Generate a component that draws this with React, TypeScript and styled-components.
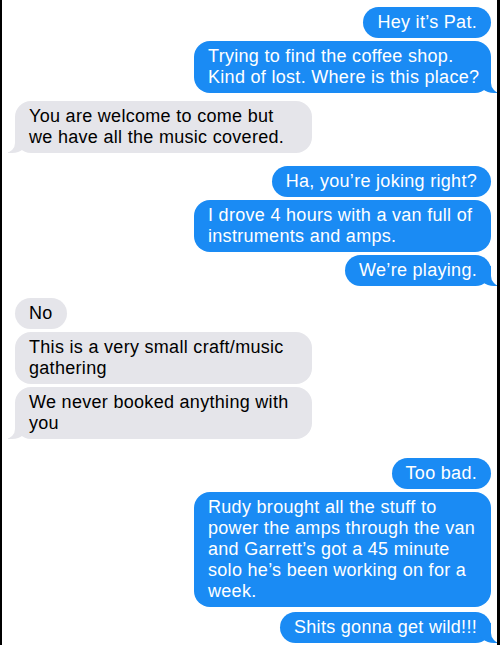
import React from "react";
import styled, { createGlobalStyle, css } from "styled-components";

const GlobalStyle = createGlobalStyle`
  html, body {
    margin: 0;
    padding: 0;
    background: #ffffff;
  }
  body {
    font-family: "Liberation Sans", Arial, Helvetica, sans-serif;
    -webkit-font-smoothing: antialiased;
  }
`;

const Frame = styled.div`
  box-sizing: border-box;
  width: 500px;
  height: 645px;
  background: #000;
  padding: 0 3px 0 2px;
`;

const Screen = styled.div`
  box-sizing: border-box;
  height: 100%;
  background: #ffffff;
  overflow: hidden;
  padding: 6px 6px 0 13px;
  display: flex;
  flex-direction: column;
`;

type Side = "me" | "them";

const Row = styled.div<{ $side: Side; $gap: number }>`
  display: flex;
  justify-content: ${(p) => (p.$side === "me" ? "flex-end" : "flex-start")};
  margin-top: ${(p) => p.$gap}px;
`;

const Bubble = styled.div<{ $side: Side; $tail: boolean; $multi: boolean }>`
  position: relative;
  box-sizing: border-box;
  width: ${(p) => (p.$multi ? "297px" : "auto")};
  padding: 5px 14px 5px 14px;
  border-radius: 16px;
  font-size: 18px;
  letter-spacing: 0.3px;
  line-height: 21px;
  white-space: nowrap;
  color: ${(p) => (p.$side === "me" ? "#ffffff" : "#000000")};
  background: ${(p) => (p.$side === "me" ? "#1a8bf4" : "#e5e5ea")};

  ${(p) =>
    p.$tail &&
    p.$side === "me" &&
    css`
      &::before {
        content: "";
        position: absolute;
        bottom: 0;
        right: -7px;
        width: 20px;
        height: 20px;
        background: #1a8bf4;
        border-bottom-left-radius: 16px 14px;
        z-index: 0;
      }
      &::after {
        content: "";
        position: absolute;
        bottom: 0;
        right: -26px;
        width: 26px;
        height: 20px;
        background: #ffffff;
        border-bottom-left-radius: 10px;
        z-index: 0;
      }
    `}

  ${(p) =>
    p.$tail &&
    p.$side === "them" &&
    css`
      &::before {
        content: "";
        position: absolute;
        bottom: 0;
        left: -7px;
        width: 20px;
        height: 20px;
        background: #e5e5ea;
        border-bottom-right-radius: 16px 14px;
        z-index: 0;
      }
      &::after {
        content: "";
        position: absolute;
        bottom: 0;
        left: -26px;
        width: 26px;
        height: 20px;
        background: #ffffff;
        border-bottom-right-radius: 10px;
        z-index: 0;
      }
    `}
`;

const Text = styled.span`
  position: relative;
  z-index: 1;
  display: block;
`;

type Message = {
  side: Side;
  lines: string[];
  gap: number;
  tail?: boolean;
};

const messages: Message[] = [
  { side: "me", lines: ["Hey it\u2019s Pat."], gap: 1 },
  {
    side: "me",
    lines: ["Trying to find the coffee shop.", "Kind of lost. Where is this place?"],
    gap: 3,
    tail: true,
  },
  {
    side: "them",
    lines: ["You are welcome to come but", "we have all the music covered."],
    gap: 8,
    tail: true,
  },
  { side: "me", lines: ["Ha, you\u2019re joking right?"], gap: 13 },
  {
    side: "me",
    lines: ["I drove 4 hours with a van full of", "instruments and amps."],
    gap: 3,
  },
  { side: "me", lines: ["We\u2019re playing."], gap: 3, tail: true },
  { side: "them", lines: ["No"], gap: 12 },
  {
    side: "them",
    lines: ["This is a very small craft/music", "gathering"],
    gap: 3,
  },
  {
    side: "them",
    lines: ["We never booked anything with", "you"],
    gap: 3,
    tail: true,
  },
  { side: "me", lines: ["Too bad."], gap: 19 },
  {
    side: "me",
    lines: [
      "Rudy brought all the stuff to",
      "power the amps through the van",
      "and Garrett\u2019s got a 45 minute",
      "solo he\u2019s been working on for a",
      "week.",
    ],
    gap: 3,
  },
  { side: "me", lines: ["Shits gonna get wild!!!"], gap: 5, tail: true },
];

export default function App() {
  return (
    <>
      <GlobalStyle />
      <Frame>
        <Screen>
          {messages.map((m, i) => (
            <Row key={i} $side={m.side} $gap={m.gap}>
              <Bubble $side={m.side} $tail={!!m.tail} $multi={m.lines.length > 1}>
                {m.lines.map((l, j) => (
                  <Text key={j}>{l}</Text>
                ))}
              </Bubble>
            </Row>
          ))}
        </Screen>
      </Frame>
    </>
  );
}
